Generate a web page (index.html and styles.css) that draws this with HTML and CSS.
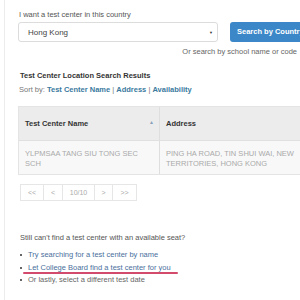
FILE: index.html
```html
<!DOCTYPE html>
<html>
<head>
<meta charset="utf-8">
<link rel="stylesheet" href="styles.css">
</head>
<body>
<div class="page">
  <div class="label">I want a test center in this country</div>
  <div class="search-row">
    <div class="select"><span>Hong Kong</span><span class="caret">▼</span></div>
    <div class="btn">Search by Country</div>
  </div>
  <div class="alt">Or <span class="alt-link">search by school name or code</span></div>

  <div class="title">Test Center Location Search Results</div>
  <div class="sort">Sort by: <a class="sl">Test Center Name</a> | <a class="sl">Address</a> | <a class="sl">Availability</a></div>

  <div class="table">
    <div class="thead">
      <div class="c1 th">Test Center Name<span class="arrow">▲</span></div>
      <div class="c2 th">Address</div>
    </div>
    <div class="trow">
      <div class="c1 td">YLPMSAA TANG SIU TONG SEC<br>SCH</div>
      <div class="c2 td">PING HA ROAD, TIN SHUI WAI, NEW<br>TERRITORIES, HONG KONG</div>
    </div>
  </div>

  <div class="pager">
    <div class="pg w23">&lt;&lt;</div>
    <div class="pg w19">&lt;</div>
    <div class="pg w32">10/10</div>
    <div class="pg w18">&gt;</div>
    <div class="pg w25">&gt;&gt;</div>
  </div>

  <div class="still">Still can't find a test center with an available seat?</div>
  <ul class="opts">
    <li><a class="ol">Try searching for a test center by name</a></li>
    <li><a class="ol marked">Let College Board find a test center for you</a></li>
    <li>Or lastly, select a different test date</li>
  </ul>
</div>
</body>
</html>
```
FILE: styles.css
```css
html, body {
  margin: 0;
  padding: 0;
  width: 300px;
  height: 300px;
  overflow: hidden;
  background: #fff;
}
body {
  font-family: "Liberation Sans", Arial, sans-serif;
  font-size: 7.5px;
  color: #555;
}
.page {
  margin-left: 4px;
  border-left: 1px solid #ececec;
  height: 300px;
  padding: 10px 0 0 14px;
  box-sizing: border-box;
}
.label {
  line-height: 10px;
  color: #555;
}
.search-row {
  display: flex;
  margin-top: 2px;
  height: 20px;
  width: 320px;
  margin-left: -1px;
}
.select {
  width: 200px;
  height: 20px;
  box-sizing: border-box;
  border: 1px solid #dcdcdc;
  border-radius: 3px;
  display: flex;
  align-items: center;
  justify-content: space-between;
  padding: 0 4px 0 9px;
  font-size: 8px;
  color: #444;
}
.caret {
  font-size: 4px;
  color: #333;
}
.btn {
  margin-left: 12px;
  width: 100px;
  height: 20px;
  background: #3b87c8;
  border-radius: 3px;
  color: #fff;
  font-weight: bold;
  font-size: 7.5px;
  line-height: 20px;
  padding-left: 7px;
  box-sizing: border-box;
  white-space: nowrap;
}
.alt {
  margin-top: 5px;
  line-height: 10px;
  text-align: right;
  padding-right: 3px;
  color: #666;
}
.title {
  margin-top: 14px;
  margin-left: 1px;
  line-height: 10px;
  font-weight: bold;
  color: #333;
}
.sort {
  margin-top: 4px;
  line-height: 10px;
  color: #777;
}
.sl {
  color: #3a7a9e;
  font-weight: bold;
}
.table {
  margin-top: 11px;
  margin-left: -1px;
  width: 300px;
  border: 1px solid #e4e4e4;
  border-right: none;
}
.thead {
  display: flex;
  height: 33px;
  background: #ececec;
  border-bottom: 1px solid #e0e0e0;
}
.trow {
  display: flex;
  height: 33px;
  background: #f8f8f8;
}
.c1 {
  width: 141px;
  border-right: 1px solid #dedede;
  box-sizing: border-box;
  position: relative;
}
.c2 {
  flex: 1;
  padding-left: 6px;
}
.th {
  display: flex;
  align-items: center;
  font-weight: bold;
  color: #333;
}
.c1.th {
  padding-left: 6px;
}
.arrow {
  position: absolute;
  right: 5px;
  top: 12px;
  font-size: 5px;
  color: #8aa0b8;
}
.td {
  padding-top: 8px;
  line-height: 10px;
  color: #aaa;
}
.c1.td {
  padding-left: 6px;
}
.pager {
  display: flex;
  margin-top: 9px;
  margin-left: 1px;
  height: 17px;
}
.pg {
  height: 17px;
  box-sizing: border-box;
  border: 1px solid #e6e6e6;
  margin-right: -1px;
  display: flex;
  align-items: center;
  justify-content: center;
  color: #aaa;
  font-size: 7px;
}
.w23 { width: 24px; }
.w19 { width: 20px; }
.w32 { width: 33px; }
.w18 { width: 19px; }
.w25 { width: 25px; }
.still {
  margin-top: 32px;
  margin-left: 1px;
  line-height: 10px;
  color: #555;
}
.opts {
  list-style: none;
  margin: 6px 0 0 1px;
  padding: 0;
}
.opts li {
  line-height: 12.5px;
  color: #666;
  position: relative;
  padding-left: 8px;
}
.opts li::before {
  content: "";
  position: absolute;
  left: 0;
  top: 5px;
  width: 2px;
  height: 2px;
  background: #666;
}
.ol {
  color: #4a6f9c;
}
.marked {
  position: relative;
}
.marked::after {
  content: "";
  position: absolute;
  left: -5px;
  right: -7px;
  bottom: -2px;
  height: 2px;
  background: #d24a6c;
  border-radius: 1px;
}
```
